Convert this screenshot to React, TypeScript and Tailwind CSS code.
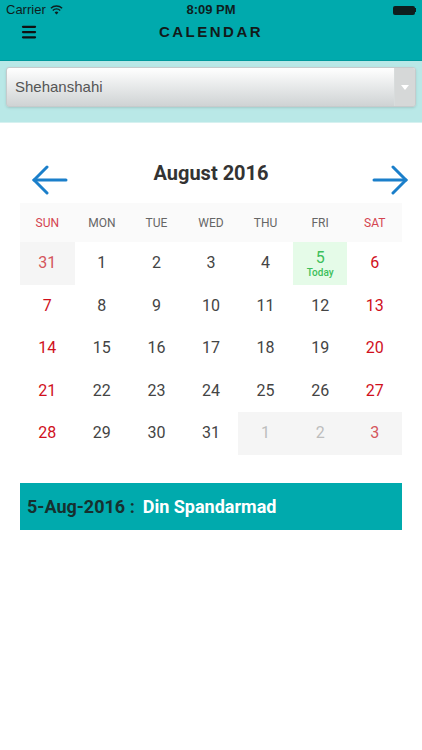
import { Menu } from 'lucide-react';

const days = ['SUN', 'MON', 'TUE', 'WED', 'THU', 'FRI', 'SAT'];

type Cell = { n: number; muted?: boolean; today?: boolean };

const weeks: Cell[][] = [
  [{ n: 31, muted: true }, { n: 1 }, { n: 2 }, { n: 3 }, { n: 4 }, { n: 5, today: true }, { n: 6 }],
  [{ n: 7 }, { n: 8 }, { n: 9 }, { n: 10 }, { n: 11 }, { n: 12 }, { n: 13 }],
  [{ n: 14 }, { n: 15 }, { n: 16 }, { n: 17 }, { n: 18 }, { n: 19 }, { n: 20 }],
  [{ n: 21 }, { n: 22 }, { n: 23 }, { n: 24 }, { n: 25 }, { n: 26 }, { n: 27 }],
  [{ n: 28 }, { n: 29 }, { n: 30 }, { n: 31 }, { n: 1, muted: true }, { n: 2, muted: true }, { n: 3, muted: true }],
];

function Arrow({ dir }: { dir: 'left' | 'right' }) {
  return (
    <svg width="36" height="32" viewBox="0 0 36 32" fill="none" stroke="#1b7fca" strokeWidth="3" strokeLinecap="round">
      {dir === 'left' ? (
        <>
          <path d="M2 16 H34" />
          <path d="M15 3 L2 16 L15 29" />
        </>
      ) : (
        <>
          <path d="M2 16 H34" />
          <path d="M21 3 L34 16 L21 29" />
        </>
      )}
    </svg>
  );
}

function DayCell({ cell, col }: { cell: Cell; col: number }) {
  const weekend = col === 0 || col === 6;
  let bg = 'bg-white';
  let color = weekend ? 'text-[#d0101c]' : 'text-[#444]';
  if (cell.muted) {
    bg = 'bg-[#f5f5f5]';
    color = weekend ? 'text-[#d4555c]' : 'text-[#bdbdbd]';
  }
  if (cell.today) {
    bg = 'bg-[#e5fbe8]';
    color = 'text-[#3dbf5b]';
  }
  return (
    <div className={`flex h-[42.5px] flex-col items-center justify-center ${bg} ${color}`}>
      <span className={`text-[16px] leading-none ${cell.today ? 'mt-[2px]' : ''}`}>{cell.n}</span>
      {cell.today && <span className="mt-[2px] text-[10px] font-medium leading-none">Today</span>}
    </div>
  );
}

export default function App() {
  return (
    <div className="min-h-[750px] w-full bg-white font-['Roboto',sans-serif]">
      <header className="h-[61px] border-b border-[#009a9d] bg-[#00aaad]">
        <div className="relative flex h-5 items-center px-[6px] font-['Liberation_Sans',sans-serif] text-[13px] text-[#0e1e1e]">
          <span>Carrier</span>
          <svg className="ml-1" width="13" height="10" viewBox="0 0 13 10">
            <path d="M6.5 9.5 L4.6 7.4 A2.8 2.8 0 0 1 8.4 7.4 Z" fill="#0e1e1e" />
            <path d="M2.8 5.4 A5.3 5.3 0 0 1 10.2 5.4" stroke="#0e1e1e" strokeWidth="1.4" fill="none" />
            <path d="M0.9 3.3 A8 8 0 0 1 12.1 3.3" stroke="#0e1e1e" strokeWidth="1.4" fill="none" />
          </svg>
          <span className="absolute left-1/2 -translate-x-1/2 font-semibold">8:09 PM</span>
          <div className="ml-auto flex items-center">
            <div className="h-[9px] w-[22px] rounded-[2px] bg-[#0e1e1e]" />
            <div className="h-[4px] w-[1.5px] bg-[#0e1e1e]" />
          </div>
        </div>
        <div className="relative flex h-6 items-center px-5">
          <Menu size={18} strokeWidth={3} className="text-[#111]" />
          <span className="absolute left-1/2 -translate-x-1/2 font-['Liberation_Sans',sans-serif] text-[15px] font-bold tracking-[2.5px] text-[#121a1a]">
            CALENDAR
          </span>
        </div>
      </header>

      <div className="h-[62px] border-b border-[#d6f1f0] bg-[#b9e8e7] px-[6px] pt-[6px]">
        <div className="flex h-[40px] overflow-hidden rounded-[3px] border border-[#c6cbcc] bg-gradient-to-b from-white to-[#cfd3d4] shadow-sm">
          <div className="flex flex-1 items-center px-2 font-['Liberation_Sans',sans-serif] text-[15px] text-[#555]">
            Shehanshahi
          </div>
          <div className="flex w-[21px] items-center justify-center border-l border-[#d8dcdc] bg-[#d6d8d8]">
            <div className="h-0 w-0 border-x-[4px] border-t-[5px] border-x-transparent border-t-white" />
          </div>
        </div>
      </div>

      <div className="relative mt-[41px] flex items-center justify-between pl-[32px] pr-[14px]">
        <Arrow dir="left" />
        <span className="absolute left-1/2 top-[-6px] -translate-x-1/2 text-[20px] font-bold text-[#333]">
          August 2016
        </span>
        <Arrow dir="right" />
      </div>

      <div className="mx-5 mt-[7px]">
        <div className="grid h-[39px] grid-cols-7 bg-[#fafafa]">
          {days.map((d, i) => (
            <div
              key={d}
              className={`flex items-center justify-center text-[12px] ${
                i === 0 || i === 6 ? 'text-[#d4434f]' : 'text-[#666]'
              }`}
            >
              {d}
            </div>
          ))}
        </div>
        {weeks.map((w, wi) => (
          <div key={wi} className="grid grid-cols-7">
            {w.map((c, ci) => (
              <DayCell key={ci} cell={c} col={ci} />
            ))}
          </div>
        ))}
      </div>

      <div className="mx-5 mt-[28px] flex h-[47px] items-center bg-[#00aaad] px-[7px] text-[18px] font-bold">
        <span className="text-[#16302f]">5-Aug-2016 :</span>
        <span className="ml-[8px] text-white">Din Spandarmad</span>
      </div>
    </div>
  );
}
